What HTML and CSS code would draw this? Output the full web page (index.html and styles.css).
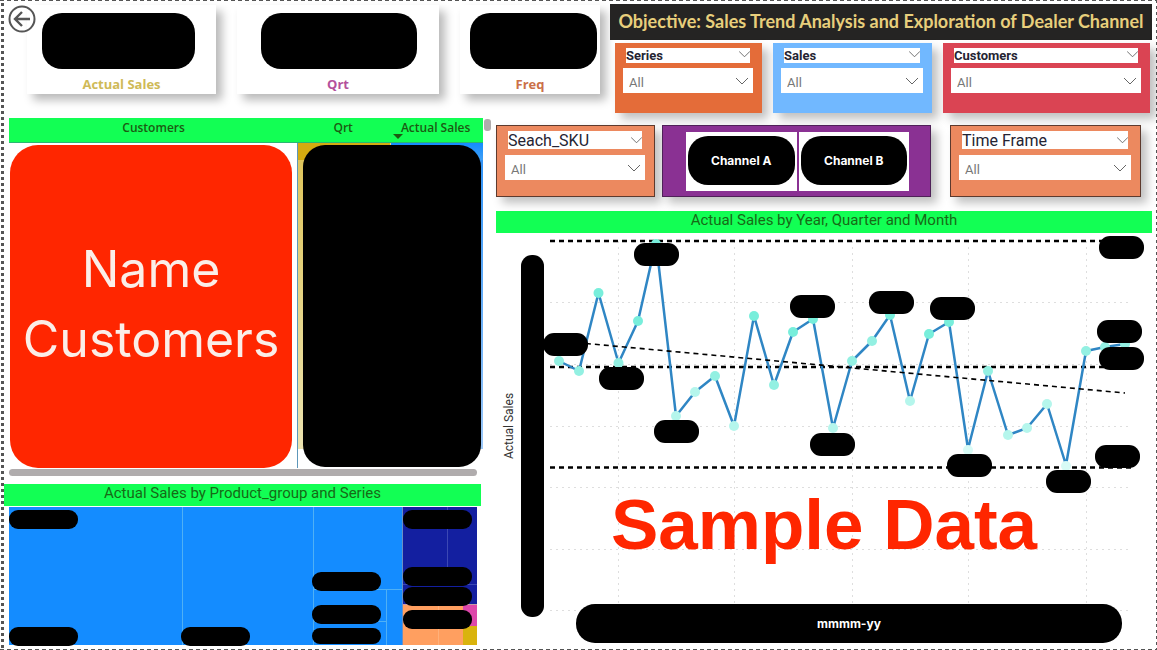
FILE: index.html
```html
<!DOCTYPE html>
<html lang="en">
<head>
<meta charset="utf-8">
<meta name="viewport" content="width=device-width, initial-scale=1">
<title>Sales Trend Analysis</title>
<link rel="stylesheet" href="styles.css">
</head>
<body>
<main class="report">
  <button class="back" type="button" aria-label="Back">
    <svg viewBox="0 0 28 28" fill="none" stroke="#555" stroke-width="2"><circle cx="14" cy="14" r="12.5"/><path d="M22 14H7M14 7l-7 7 7 7" stroke-width="2.4"/></svg>
  </button>

  <header class="top">
    <section class="cards">
      <div class="card card-sales"><div class="card-value"></div><div class="card-label">Actual Sales</div></div>
      <div class="card card-qrt"><div class="card-value"></div><div class="card-label">Qrt</div></div>
      <div class="card card-freq"><div class="card-value"></div><div class="card-label">Freq</div></div>
    </section>
    <section class="heading">
      <h1 class="objective">Objective: Sales Trend Analysis and Exploration of Dealer Channel</h1>
      <div class="slicers">
        <div class="slicer slicer-series">
          <div class="slicer-head"><label for="series">Series</label><button class="chevron" type="button" aria-label="Series options"><svg viewBox="0 0 12 7"><path d="M0 0l6 6 6-6"/></svg></button></div>
          <div class="picker"><select id="series"><option>All</option></select><svg viewBox="0 0 12 7"><path d="M0 0l6 6 6-6"/></svg></div>
        </div>
        <div class="slicer slicer-sales">
          <div class="slicer-head"><label for="sales">Sales</label><button class="chevron" type="button" aria-label="Sales options"><svg viewBox="0 0 12 7"><path d="M0 0l6 6 6-6"/></svg></button></div>
          <div class="picker"><select id="sales"><option>All</option></select><svg viewBox="0 0 12 7"><path d="M0 0l6 6 6-6"/></svg></div>
        </div>
        <div class="slicer slicer-customers">
          <div class="slicer-head"><label for="customers">Customers</label><button class="chevron" type="button" aria-label="Customers options"><svg viewBox="0 0 12 7"><path d="M0 0l6 6 6-6"/></svg></button></div>
          <div class="picker"><select id="customers"><option>All</option></select><svg viewBox="0 0 12 7"><path d="M0 0l6 6 6-6"/></svg></div>
        </div>
      </div>
    </section>
  </header>

  <div class="body">
    <section class="left">
      <div class="table-wrap">
        <table class="matrix">
          <colgroup><col class="col-name"><col class="col-qrt"><col class="col-sales"></colgroup>
          <thead><tr><th>Customers</th><th>Qrt</th><th class="sorted">Actual Sales</th></tr></thead>
          <tbody><tr>
            <td class="names"><div class="name-cover">Name<br>Customers</div></td>
            <td class="values" colspan="2"><div class="value-cover"></div></td>
          </tr></tbody>
        </table>
        <div class="thumb-y"></div>
      </div>
      <div class="thumb-x"></div>
      <h2 class="band band-tree">Actual Sales by Product_group and Series</h2>
      <svg class="tree" viewBox="4 506 478 141" role="img" aria-label="Treemap of actual sales">
        <rect x="9" y="507" width="394" height="138" fill="#148cff"/>
        <rect x="403" y="507" width="74" height="97" fill="#131fa0"/>
        <rect x="403" y="604" width="60" height="41" fill="#ff9f60"/>
        <rect x="463" y="604" width="14" height="22" fill="#dd47aa"/>
        <rect x="463" y="626" width="14" height="19" fill="#d9b30d"/>
        <g fill="none" stroke="#4fb0f5"><path d="M182.500 507V645M313.500 507V645M313 589.500H402M386.500 589V645M313 621.500H386"/></g>
        <path d="M402.500 507V645" stroke="#6b8fc4"/>
        <path d="M447.500 507V584M403 584.500H477" stroke="#3c48b4" fill="none"/>
        <path d="M403 604.500H477" stroke="#c79ba5"/>
        <path d="M438.500 604V645" stroke="#ffb07a"/>
        <g fill="#000">
          <rect x="9" y="510" width="69" height="19" rx="9"/><rect x="9" y="627" width="69" height="19" rx="9"/>
          <rect x="181" y="627" width="69" height="19" rx="9"/><rect x="312" y="572" width="69" height="19" rx="9"/>
          <rect x="312" y="605" width="69" height="19" rx="9"/><rect x="312" y="628" width="69" height="16" rx="8"/>
          <rect x="403" y="510" width="69" height="19" rx="9"/><rect x="403" y="567" width="69" height="19" rx="9"/>
          <rect x="403" y="587" width="69" height="19" rx="9"/><rect x="403" y="610" width="69" height="19" rx="9"/>
        </g>
      </svg>
    </section>

    <section class="right">
      <div class="filters">
        <div class="slicer slicer-large">
          <div class="slicer-head"><label for="sku">Seach_SKU</label><button class="chevron" type="button" aria-label="SKU options"><svg viewBox="0 0 12 7"><path d="M0 0l6 6 6-6"/></svg></button></div>
          <div class="picker"><select id="sku"><option>All</option></select><svg viewBox="0 0 12 7"><path d="M0 0l6 6 6-6"/></svg></div>
        </div>
        <div class="channels">
          <div class="channel-slot"><button class="channel" type="button">Channel A</button></div>
          <div class="channel-slot"><button class="channel" type="button">Channel B</button></div>
        </div>
        <div class="slicer slicer-large slicer-time">
          <div class="slicer-head"><label for="time">Time Frame</label><button class="chevron" type="button" aria-label="Time options"><svg viewBox="0 0 12 7"><path d="M0 0l6 6 6-6"/></svg></button></div>
          <div class="picker"><select id="time"><option>All</option></select><svg viewBox="0 0 12 7"><path d="M0 0l6 6 6-6"/></svg></div>
        </div>
      </div>
      <h2 class="band">Actual Sales by Year, Quarter and Month</h2>
      <svg class="trend" viewBox="496 233 656 413" role="img" aria-label="Line chart of actual sales">
        <g fill="none" stroke="#dedede" stroke-dasharray="2 4">
          <path d="M550 302.500H1132M550 364.500H1132M550 426.500H1132M550 487.500H1132M550 549.500H1132M550 610.500H1132"/>
          <path d="M618.500 241V610M734.500 241V610M852.500 241V610M968.500 241V610M1086.500 241V610"/>
        </g>
        <path d="M550 241H1131M550 367H1131M550 467.500H1131" stroke="#000" stroke-width="2.400" stroke-dasharray="5 4" fill="none"/>
        <polyline fill="none" stroke="#2f86c4" stroke-width="2.500" stroke-linejoin="round" points="559,361 579,371 598.500,293 618.500,363 638,321 656,242 676,416 695,392 715,376 734,426 754,316 774,385 793,332 813,319 833,428 852,361 872,341 890,315 910,401 929,334 949,322 968,449 988,371 1008,435 1027,428 1047,404 1066,465 1086,351 1105,347 1125,344"/>
        <g fill="#78eedb">
          <circle cx="598.500" cy="293" r="5"/><circle cx="638" cy="321" r="5"/><circle cx="656" cy="244" r="5"/><circle cx="754" cy="316" r="5"/><circle cx="793" cy="332" r="5"/><circle cx="813" cy="319" r="5"/><circle cx="890" cy="315" r="5"/><circle cx="929" cy="334" r="5"/><circle cx="949" cy="322" r="5"/>
        </g>
        <g fill="#93f0e2">
          <circle cx="559" cy="361" r="5"/><circle cx="579" cy="371" r="5"/><circle cx="618.500" cy="363" r="5"/><circle cx="774" cy="385" r="5"/><circle cx="852" cy="361" r="5"/><circle cx="872" cy="341" r="5"/><circle cx="988" cy="371" r="5"/><circle cx="1086" cy="351" r="5"/><circle cx="1105" cy="347" r="5"/><circle cx="1125" cy="344" r="5"/><circle cx="715" cy="376" r="5"/>
        </g>
        <g fill="#b5f6ec">
          <circle cx="676" cy="416" r="5"/><circle cx="695" cy="392" r="5"/><circle cx="734" cy="426" r="5"/><circle cx="833" cy="428" r="5"/><circle cx="910" cy="401" r="5"/><circle cx="1008" cy="435" r="5"/><circle cx="1027" cy="428" r="5"/><circle cx="1047" cy="404" r="5"/>
        </g>
        <g fill="#d8fbf6"><circle cx="968" cy="450" r="5"/><circle cx="1066" cy="466" r="5"/></g>
        <path d="M559 341L1125 393" stroke="#000" stroke-width="1.600" stroke-dasharray="5 4"/>
        <g fill="#000">
          <rect x="634" y="243" width="45" height="23" rx="11"/><rect x="543" y="333" width="45" height="23" rx="11"/>
          <rect x="599" y="367" width="45" height="23" rx="11"/><rect x="654" y="420" width="45" height="23" rx="11"/>
          <rect x="790" y="295" width="45" height="23" rx="11"/><rect x="810" y="433" width="45" height="23" rx="11"/>
          <rect x="869" y="291" width="45" height="23" rx="11"/><rect x="930" y="297" width="45" height="23" rx="11"/>
          <rect x="947" y="454" width="45" height="23" rx="11"/><rect x="1046" y="470" width="45" height="23" rx="11"/>
          <rect x="1099" y="236" width="45" height="23" rx="11"/><rect x="1097" y="320" width="45" height="23" rx="11"/>
          <rect x="1099" y="347" width="45" height="23" rx="11"/><rect x="1095" y="445" width="45" height="23" rx="11"/>
          <rect x="521" y="255" width="23" height="362" rx="11"/><rect x="576" y="604" width="546" height="39" rx="19"/>
        </g>
        <text class="axis-title" x="513" y="426" transform="rotate(-90 513 426)">Actual Sales</text>
        <text class="sample" x="824" y="549">Sample Data</text>
        <text class="axis-cover" x="849" y="628">mmmm-yy</text>
      </svg>
    </section>
  </div>
</main>
</body>
</html>
```
FILE: styles.css
```css
* { box-sizing: border-box; }

body {
  margin: 0;
  background: #fff;
  font-family: Roboto, "Liberation Sans", sans-serif;
}

button, select { font: inherit; border: 0; padding: 0; background: none; }
h1, h2 { margin: 0; font-weight: 400; }

.report {
  position: relative;
  min-height: 100vh;
  padding: 4px 5px 0 4px;
  background:
    repeating-linear-gradient(to bottom, #555 0 3px, transparent 3px 6px) 1px 3px / 3px 100% no-repeat,
    repeating-linear-gradient(to bottom, #555 0 3px, transparent 3px 6px) 100% 0 / 1px 100% no-repeat,
    repeating-linear-gradient(to right, #555 0 4px, transparent 4px 7px) 0 0 / 100% 1px no-repeat,
    repeating-linear-gradient(to right, #555 0 4px, transparent 4px 7px) 0 100% / 100% 1px no-repeat;
}

.back {
  position: absolute;
  top: 5px;
  left: 8px;
  width: 28px;
  height: 28px;
  z-index: 1;
}
.back svg { display: block; }

.top {
  display: grid;
  grid-template-columns: 600fr 542fr;
  gap: 6px;
}

.cards {
  display: grid;
  grid-template-columns: 189fr 202fr 140fr;
  gap: 21px;
  padding: 1px 4px 19px 23px;
}
.card {
  padding-top: 8px;
  background: #fff;
  box-shadow: 6px 6px 9px rgba(0, 0, 0, .28);
}
.card-value {
  height: 56px;
  border-radius: 20px;
  background: #000;
}
.card-sales .card-value { margin: 0 21px 0 15px; }
.card-qrt .card-value { margin: 0 22px 0 24px; }
.card-freq .card-value { margin: 0 3px 0 10px; }
.card-label {
  margin-top: 7px;
  font: 700 13px/16px "Open Sans", sans-serif;
  text-align: center;
}
.card-sales .card-label { color: #cfba58; }
.card-qrt .card-label { color: #b4519c; }
.card-freq .card-label { color: #cb7048; }

.heading { display: flex; flex-direction: column; gap: 3px; min-width: 0; }
.objective {
  background: #252423;
  color: #e8cf7c;
  font: 700 18px/34px Lato, sans-serif;
  height: 36px;
  text-align: center;
  white-space: nowrap;
}

.slicers {
  display: grid;
  grid-template-columns: 147fr 159fr 207fr;
  gap: 11px;
  padding: 0 2px 0 5px;
}
.slicer {
  height: 70px;
  padding: 5px 9px 0 8px;
  box-shadow: 6px 6px 9px rgba(0, 0, 0, .25);
}
.slicer-series { background: #e46c39; }
.slicer-sales { background: #71b8ff; }
.slicer-customers { background: #da4453; }
.slicer-head {
  display: flex;
  justify-content: space-between;
  height: 15px;
  margin: 0 3px;
  background: #fff;
  color: #252433;
  font-size: 13px;
  font-weight: 700;
  line-height: 16px;
}
.chevron { width: 11px; height: 12px; }
.chevron svg, .picker svg {
  display: block;
  width: 12px;
  height: 7px;
  fill: none;
  stroke: #666;
  stroke-width: 1;
}
.chevron svg { width: 11px; }
.picker { position: relative; height: 25px; margin-top: 5px; }
.picker select {
  width: 100%;
  height: 100%;
  padding: 4px 6px 0;
  appearance: none;
  border-radius: 0;
  background: #fff;
  color: #777;
  font-size: 13px;
}
.picker svg { position: absolute; top: 10px; right: 5px; pointer-events: none; }

.body {
  display: grid;
  grid-template-columns: 487fr 656fr;
  gap: 5px;
  padding-top: 5px;
}

.table-wrap {
  display: grid;
  grid-template-columns: 1fr 7px;
  gap: 1px;
  padding-left: 5px;
}
.matrix {
  width: 100%;
  table-layout: fixed;
  border-collapse: separate;
  border-spacing: 0;
}
.col-name { width: 61%; }
.col-qrt { width: 19%; }
.col-sales { width: 20%; }
.matrix th {
  position: relative;
  height: 25px;
  padding: 0 0 5px;
  background: #12ff54;
  border-bottom: 1px solid #2bb673;
  color: #1c5a12;
  font: 600 12px/18px "Open Sans", sans-serif;
}
.sorted::after {
  content: "";
  position: absolute;
  left: 5px;
  bottom: 3px;
  border: 5px solid transparent;
  border-top-color: #1c5a12;
  border-bottom: 0;
}
.matrix td { padding: 0; vertical-align: top; }
.matrix .names { border-right: 1px solid #5d97ba; }
.values {
  background:
    linear-gradient(#d4aa10, #d4aa10) 0 0 / 50% 17px no-repeat,
    linear-gradient(#148cff, #3f9ff5) 100% 0 / 50% 17px no-repeat,
    linear-gradient(#dfc55c, #ece3b0) 0 17px / 50% 289px no-repeat,
    linear-gradient(#3193f5, #9cc8f8) 100% 17px / 50% 289px no-repeat;
}
.name-cover {
  display: flex;
  align-items: center;
  justify-content: center;
  height: 323px;
  margin: 2px 5px 0 1px;
  padding-bottom: 6px;
  border-radius: 28px;
  background: #ff2600;
  color: #fbeee8;
  font: 400 50px/70px Inter, sans-serif;
  text-align: center;
}
.value-cover {
  height: 322px;
  margin: 2px 2px 1px 5px;
  border-radius: 22px;
  background: #000;
}
.thumb-y { height: 12px; margin-top: 1px; border-radius: 3px; background: #b0acad; }
.thumb-x { height: 7px; margin: 1px 14px 8px 5px; border-radius: 4px; background: #b0acad; }

.band {
  background: #12ff54;
  color: #176a16;
  font-size: 15px;
  line-height: 19px;
  height: 22px;
  text-align: center;
}
.band-tree { margin-right: 10px; }
.tree { display: block; width: calc(100% - 9px); }

.right { padding-top: 7px; }
.filters {
  display: grid;
  grid-template-columns: 159fr 269fr 203fr;
  gap: 7px;
  margin-bottom: 14px;
  padding-right: 11px;
}
.slicer-large {
  height: 72px;
  border: 1px solid #5d3a2e;
  background: #ec895f;
}
.slicer-time { margin-left: 12px; }
.slicer-large .slicer-head {
  height: 18px;
  font-size: 16px;
  font-weight: 400;
  line-height: 20px;
}
.slicer-large .chevron { height: 18px; }
.slicer-large .picker { margin-top: 6px; }
.channels {
  display: grid;
  grid-template-columns: 1fr 1fr;
  gap: 2px;
  height: 72px;
  padding: 6px 21px 5px 23px;
  border: 1px solid #4f2158;
  background: #8a3193;
  box-shadow: 6px 6px 9px rgba(0, 0, 0, .25);
}
.channel-slot { padding: 4px 2px 0; background: #fff; }
.channel {
  width: 100%;
  height: 49px;
  border-radius: 20px;
  background: #000;
  color: #fff;
  font: 700 12px Inter, sans-serif;
}

.trend { display: block; width: 100%; }
.axis-title { font-size: 12px; fill: #333; text-anchor: middle; }
.sample { font: 700 71px "Liberation Sans", sans-serif; fill: #ff2600; text-anchor: middle; }
.axis-cover { font: 700 12px Inter, sans-serif; fill: #fff; text-anchor: middle; }
```
